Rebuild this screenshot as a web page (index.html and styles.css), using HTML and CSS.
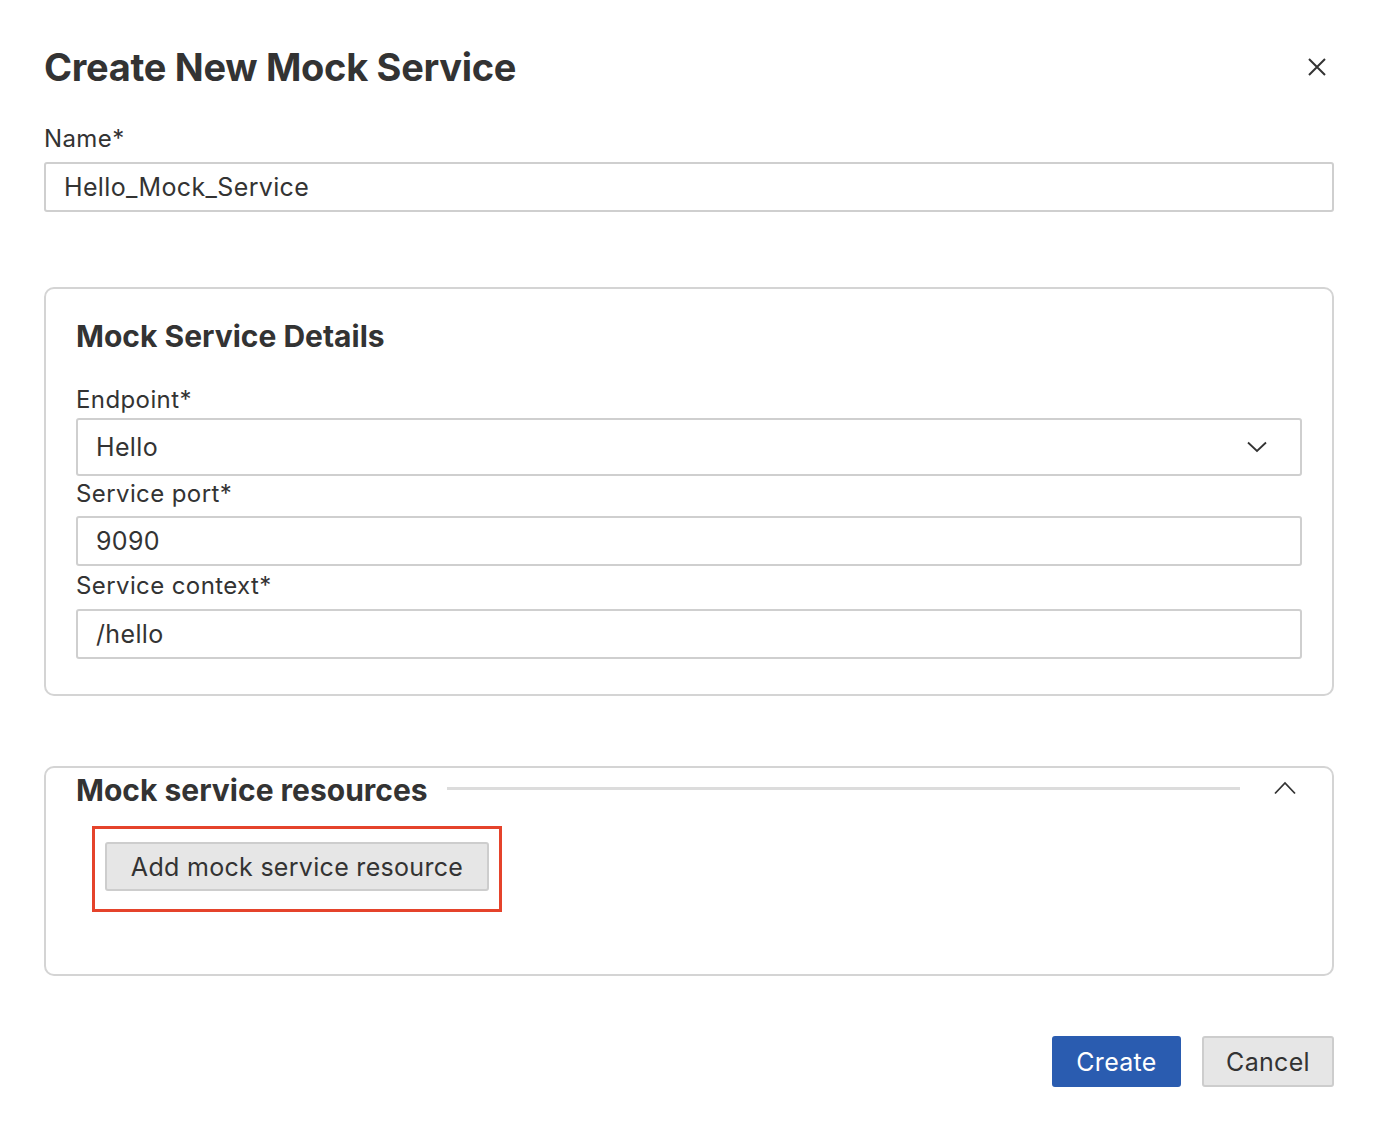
FILE: index.html
```html
<!DOCTYPE html>
<html lang="en">
<head>
<meta charset="utf-8">
<title>Create New Mock Service</title>
<link rel="stylesheet" href="styles.css">
</head>
<body>
<div class="dialog">
  <header class="dialog-header">
    <h1 class="dialog-title">Create New Mock Service</h1>
    <button class="icon-btn close-btn" aria-label="Close">
      <svg width="20" height="20" viewBox="0 0 20 20"><path d="M2 2 L18 18 M18 2 L2 18" stroke="#333" stroke-width="2" fill="none"/></svg>
    </button>
  </header>

  <label class="label label-name">Name*</label>
  <div class="input">Hello_Mock_Service</div>

  <section class="card details">
    <h2 class="card-title">Mock Service Details</h2>
    <label class="label label-endpoint">Endpoint*</label>
    <div class="select">
      <span>Hello</span>
      <svg class="chev" width="20" height="12" viewBox="0 0 20 12"><path d="M1 1.5 L10 10 L19 1.5" stroke="#333" stroke-width="1.8" fill="none"/></svg>
    </div>
    <label class="label label-port">Service port*</label>
    <div class="input">9090</div>
    <label class="label label-context">Service context*</label>
    <div class="input">/hello</div>
  </section>

  <section class="card resources">
    <div class="res-head">
      <h2 class="card-title">Mock service resources</h2>
      <div class="rule"></div>
      <svg class="chev-up" width="22" height="14" viewBox="0 0 22 14"><path d="M1 12.5 L11 2 L21 12.5" stroke="#333" stroke-width="1.8" fill="none"/></svg>
    </div>
    <div class="highlight">
      <button class="btn btn-secondary add-btn">Add mock service resource</button>
    </div>
  </section>

  <footer class="dialog-footer">
    <button class="btn btn-primary">Create</button>
    <button class="btn btn-secondary">Cancel</button>
  </footer>
</div>
</body>
</html>
```

FILE: styles.css
```css
* { box-sizing: border-box; }
html, body { margin: 0; padding: 0; background: #fff; }
body {
  font-family: Inter, "Liberation Sans", Arial, sans-serif;
  color: #333;
  font-size: 25px;
}
.dialog {
  padding: 44px 42px 0 44px;
}
.dialog-header {
  display: flex;
  justify-content: space-between;
  align-items: center;
  height: 46px;
}
.dialog-title {
  margin: 0;
  font-size: 38px;
  font-weight: 700;
  line-height: 46px;
  letter-spacing: -0.3px;
}
.icon-btn {
  border: 0;
  background: none;
  padding: 0;
  margin-right: 7px;
  display: flex;
}
.label {
  display: block;
  line-height: 30px;
  font-size: 24px;
  letter-spacing: 0.4px;
}
.label-name { margin-top: 34px; margin-bottom: 8px; }
.input, .select {
  height: 50px;
  border: 2px solid #cfcfcf;
  border-radius: 3px;
  padding: 0 18px;
  display: flex;
  align-items: center;
  font-size: 25px;
  letter-spacing: 0.35px;
}
.select {
  height: 58px;
  justify-content: space-between;
  padding-right: 33px;
}
.card {
  border: 2px solid #d4d4d4;
  border-radius: 10px;
}
.details {
  margin-top: 75px;
  padding: 27px 30px 35px 30px;
}
.card-title {
  margin: 0;
  font-size: 30px;
  font-weight: 700;
  line-height: 40px;
  letter-spacing: 0;
}
.label-endpoint { margin-top: 29px; margin-bottom: 3px; }
.label-port { margin-top: 3px; margin-bottom: 7px; }
.label-context { margin-top: 5px; margin-bottom: 8px; }

.resources {
  margin-top: 70px;
  padding: 2px 36px 62px 30px;
}
.res-head {
  display: flex;
  align-items: center;
  height: 40px;
}
.rule {
  flex: 1;
  height: 3px;
  background: #dcdcdc;
  margin: 0 34px 0 19px;
  position: relative;
  top: -2px;
}
.chev-up { margin-top: -5px; }
.highlight {
  margin-top: 16px;
  margin-left: 16px;
  width: 410px;
  border: 3px solid #e5432b;
  padding: 13px 10px 18px 10px;
}
.btn {
  font-family: Inter, "Liberation Sans", Arial, sans-serif;
  font-size: 25px;
  border-radius: 3px;
  height: 51px;
  padding: 0 20px;
  cursor: pointer;
  letter-spacing: 0.3px;
}
.btn-secondary {
  background: #e6e6e6;
  border: 2px solid #cdcdcd;
  color: #333;
}
.btn-primary {
  background: #2a5cb0;
  border: 2px solid #2a5cb0;
  color: #fff;
}
.add-btn {
  width: 384px;
  height: 49px;
  display: block;
  padding: 0;
}
.dialog-footer {
  margin-top: 60px;
  display: flex;
  justify-content: flex-end;
  gap: 21px;
}
.dialog-footer .btn-primary { width: 129px; }
.dialog-footer .btn-secondary { width: 132px; }
```
